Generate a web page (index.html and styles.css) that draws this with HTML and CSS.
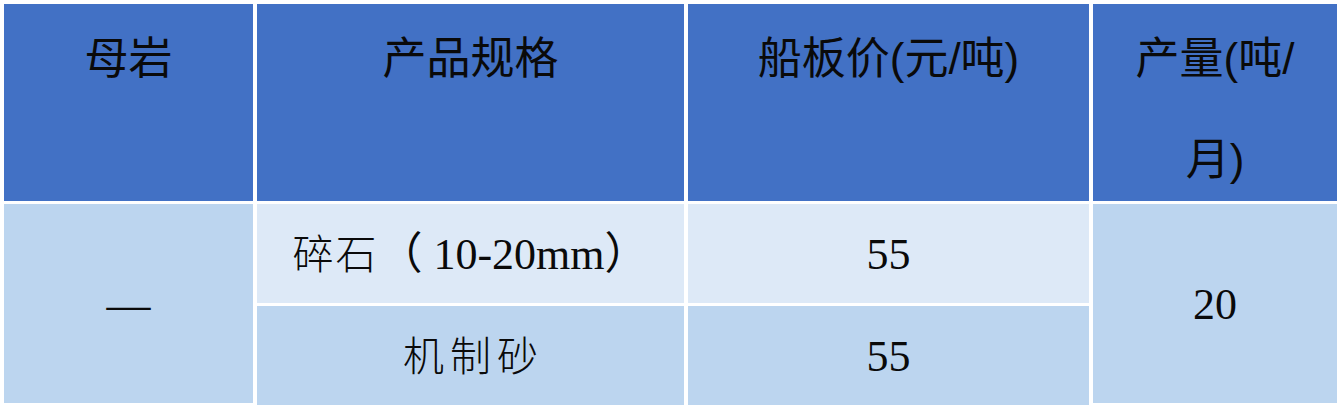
FILE: index.html
```html
<!DOCTYPE html>
<html lang="zh-CN">
<head>
<meta charset="utf-8">
<title>产品价格表</title>
<link rel="stylesheet" href="styles.css">
</head>
<body>
<div class="table">
  <div class="cell head">母岩</div>
  <div class="cell head">产品规格</div>
  <div class="cell head">船板价(元/吨)</div>
  <div class="cell head">产量(吨/月)</div>
  <div class="cell body dark span">—</div>
  <div class="cell body light"><span class="cjk">碎石</span>（ 10-20mm）</div>
  <div class="cell body light">55</div>
  <div class="cell body dark span">20</div>
  <div class="cell body dark"><span class="cjk spaced">机制砂</span></div>
  <div class="cell body dark">55</div>
</div>
</body>
</html>
```

FILE: styles.css
```css
html, body {
  margin: 0;
  padding: 0;
  background: #ffffff;
}

.table {
  display: grid;
  grid-template-columns: 249px 427px 401px 244px;
  grid-template-rows: 197px 99px 99px;
  column-gap: 4px;
  row-gap: 3px;
  margin: 4px 0 0 4px;
  width: max-content;
}

.cell {
  box-sizing: border-box;
  color: #0a0a0a;
  text-align: center;
}

.head {
  background: #4271c5;
  font-family: "Liberation Sans", "Noto Sans CJK SC", sans-serif;
  font-size: 44px;
  line-height: 101px;
  padding: 4px 24px 0;
}

.body {
  display: flex;
  align-items: center;
  justify-content: center;
  font-family: "Liberation Serif", "Noto Sans CJK SC", serif;
  font-size: 44px;
  line-height: 44px;
  padding-top: 2px;
}

.dark {
  background: #bcd5ef;
}

.light {
  background: #dde9f7;
}

.span {
  grid-row: span 2;
  margin-bottom: 2px;
}

.cjk {
  font-weight: 300;
  font-size: 41px;
  letter-spacing: 2px;
}

.spaced {
  letter-spacing: 6px;
  margin-right: -6px;
}
```
